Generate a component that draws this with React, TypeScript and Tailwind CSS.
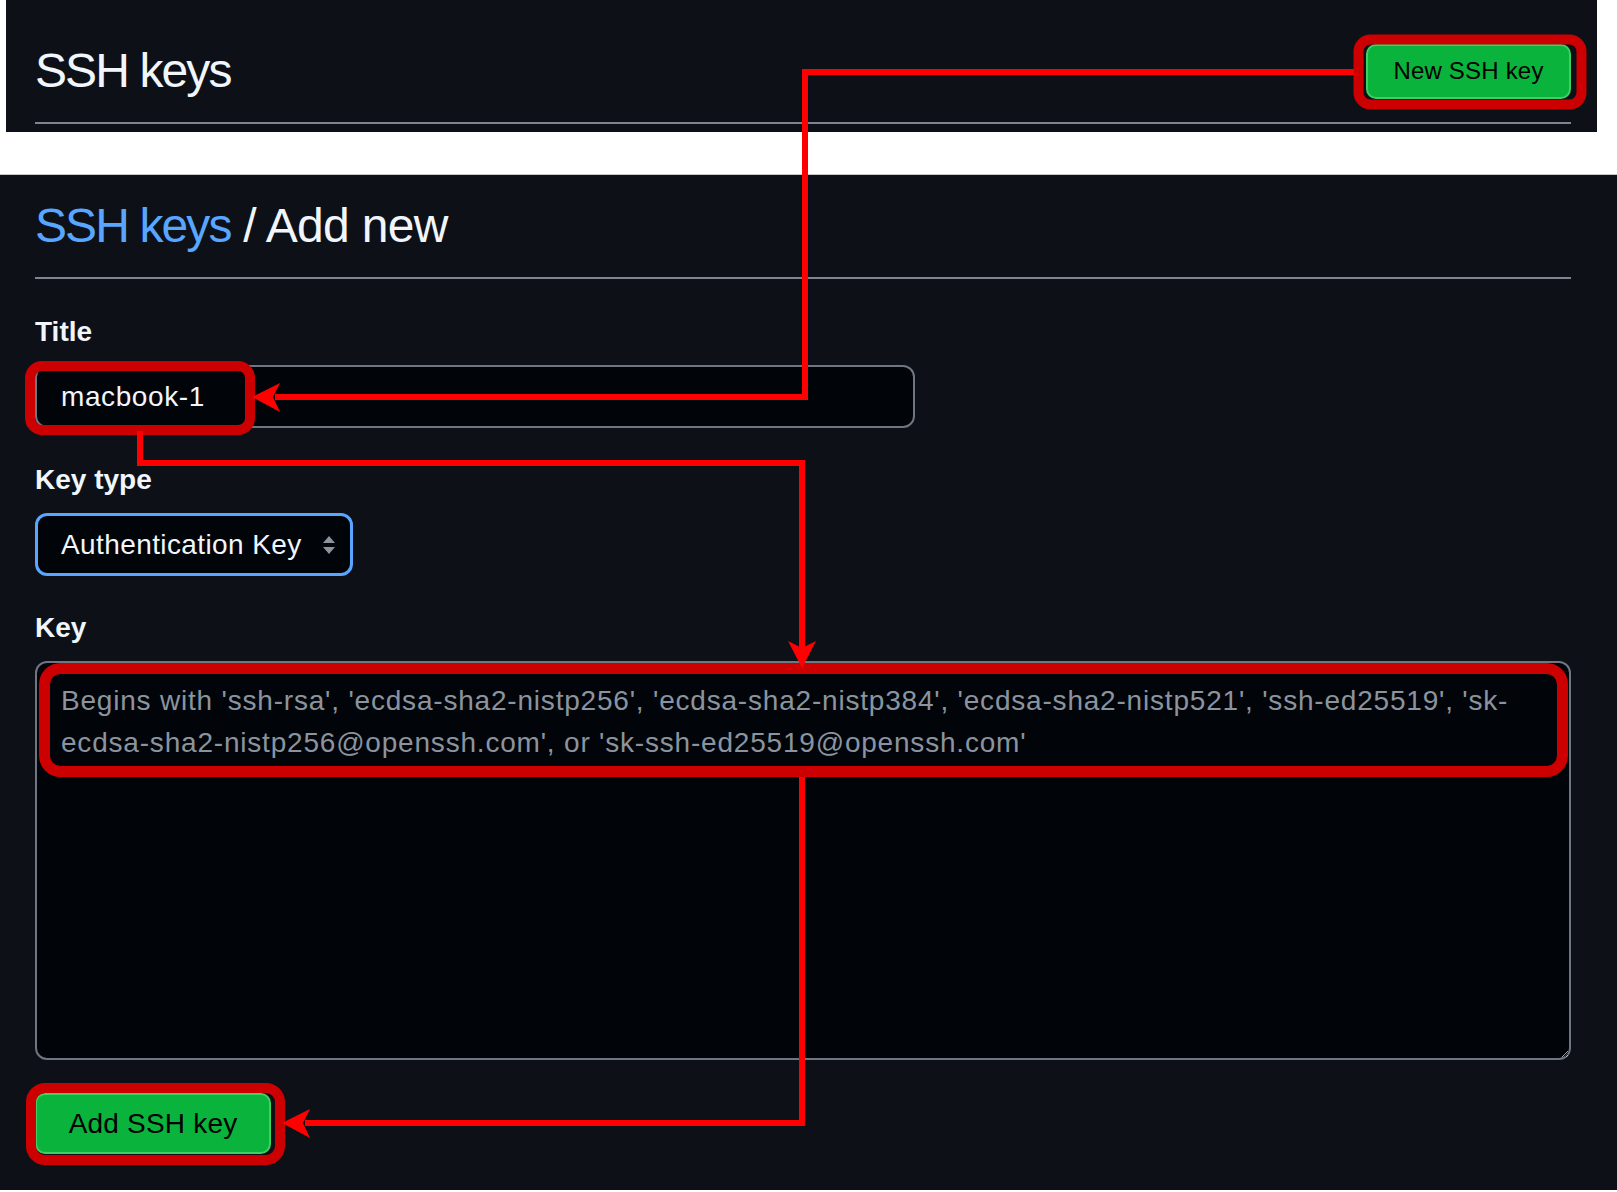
export default function App() {
    return (
        <div
            className="relative h-[1192px] w-[1617px] overflow-hidden bg-white text-[#f0f6fc]"
            style={{ fontFamily: '"Liberation Sans", Arial, sans-serif' }}
        >
            {/* list page header */}
            <section className="ml-[6px] flex h-[132px] w-[1591px] flex-col bg-[#0d1117] pl-[29px] pr-[26px]">
                <div className="mt-[41px] flex h-[60px] items-center justify-between">
                    <h2 className="text-[48px] leading-[60px] tracking-[-1.9px]">SSH keys</h2>
                    <button className="flex h-[55px] w-[205px] items-center justify-center rounded-[10px] border-2 border-[#3fcf63] bg-[#0ab43c] text-[24px] tracking-[0.2px] text-black">
                        New SSH key
                    </button>
                </div>
                <div className="mt-[21px] h-[2px] bg-[#7d8590]" />
            </section>

            {/* add new form */}
            <section className="mt-[42px] flex h-[1016px] flex-col border-t border-[#c8c8c8] bg-[#0d1117] pl-[35px] pr-[46px]">
                <h2 className="mt-[21px] text-[48px] leading-[60px] tracking-[-0.7px]">
                    <span className="text-[#58a6ff] tracking-[-1.9px]">SSH keys</span> / Add new
                </h2>
                <div className="mt-[21px] h-[2px] bg-[#7d8590]" />

                <label className="mt-[35px] text-[28px] font-bold leading-[36px]">Title</label>
                <input
                    readOnly
                    value="macbook-1"
                    className="mt-[15px] h-[63px] w-[880px] rounded-[12px] border-2 border-[#6e7681] bg-[#010409] px-[24px] text-[28px] tracking-[0.6px] text-[#f0f6fc] outline-none"
                />

                <label className="mt-[34px] text-[28px] font-bold leading-[36px]">Key type</label>
                <div className="relative mt-[15px] h-[63px] w-[318px]">
                    <select className="h-full w-full appearance-none rounded-[12px] border-[3px] border-[#58a6ff] bg-[#010409] pl-[23px] text-[28px] tracking-[0.4px] text-[#f0f6fc] outline-none">
                        <option>Authentication Key</option>
                        <option>Signing Key</option>
                    </select>
                    <svg
                        className="pointer-events-none absolute right-[16px] top-[22px]"
                        width="16"
                        height="20"
                        viewBox="0 0 16 20"
                    >
                        <path d="M8 1 L14 8 L2 8 Z" fill="#8b949e" />
                        <path d="M8 19 L14 12 L2 12 Z" fill="#8b949e" />
                    </svg>
                </div>

                <label className="mt-[34px] text-[28px] font-bold leading-[36px]">Key</label>
                <textarea
                    placeholder="Begins with 'ssh-rsa', 'ecdsa-sha2-nistp256', 'ecdsa-sha2-nistp384', 'ecdsa-sha2-nistp521', 'ssh-ed25519', 'sk-ecdsa-sha2-nistp256@openssh.com', or 'sk-ssh-ed25519@openssh.com'"
                    className="mt-[15px] h-[399px] w-full rounded-[12px] border-2 border-[#6e7681] bg-[#010409] px-[24px] pb-[8px] pt-[17px] text-[28px] leading-[42px] tracking-[0.8px] text-[#f0f6fc] outline-none placeholder:text-[#8b949e]"
                />

                <button className="mt-[33px] flex h-[61px] w-[236px] items-center justify-center rounded-[10px] border-2 border-[#3fcf63] bg-[#0ab43c] text-[28px] tracking-[0.2px] text-black">
                    Add SSH key
                </button>
            </section>

            {/* annotations */}
            <svg
                className="pointer-events-none absolute left-0 top-0"
                width="1617"
                height="1192"
                viewBox="0 0 1617 1192"
            >
                <g fill="none" stroke="#cc0000" strokeWidth="10">
                    <rect x="1358.5" y="39.5" width="223" height="65" rx="12" />
                    <rect x="30" y="366" width="220" height="64" rx="12" />
                    <rect x="44.5" y="668.5" width="1518" height="103" rx="16" strokeWidth="11" />
                    <rect x="31" y="1088" width="249" height="72" rx="14" />
                </g>
                <g fill="none" stroke="#ff0000" strokeWidth="6" strokeLinejoin="miter">
                    <polyline points="1354,72 805,72 805,397 275,397" />
                    <polyline points="140,431 140,463 802,463 802,648" />
                    <polyline points="802,777 802,1123 305,1123" />
                </g>
                <g fill="#ff0000">
                    <polygon points="252,397 280,383 273,397 280,412" />
                    <polygon points="802,668 788,641 802,648 816,641" />
                    <polygon points="282,1123 310,1109 303,1123 310,1138" />
                </g>
            </svg>
        </div>
    );
}
